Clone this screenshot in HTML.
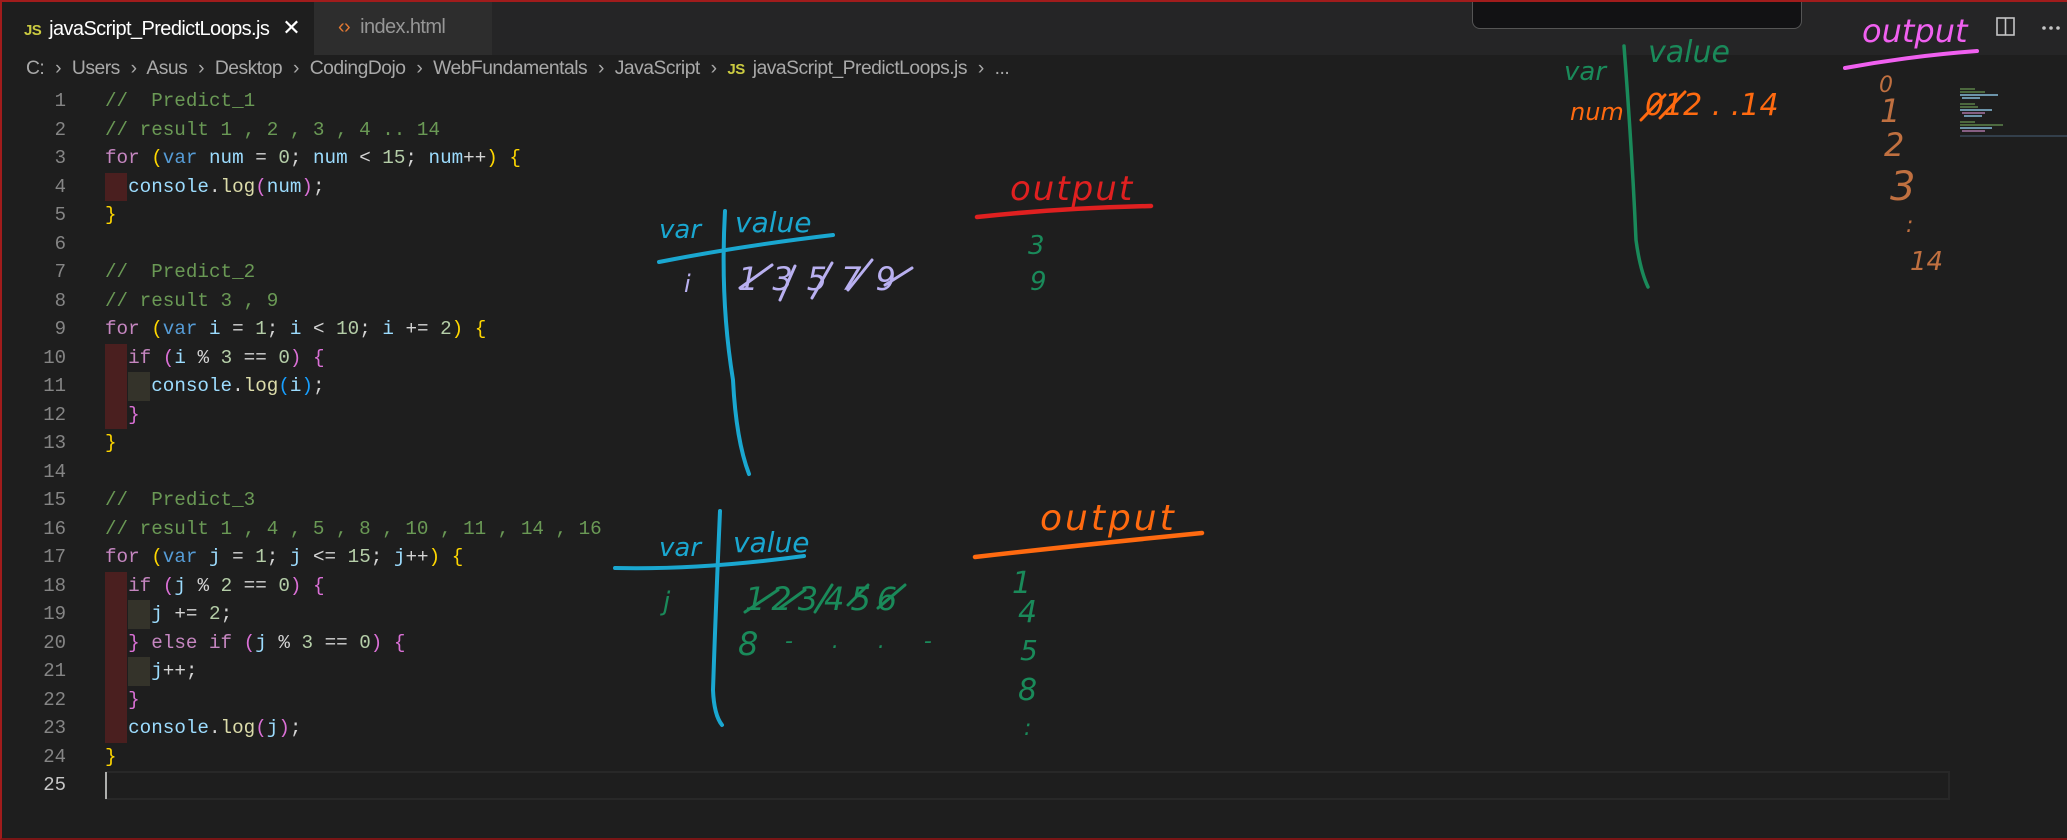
<!DOCTYPE html>
<html><head><meta charset="utf-8"><style>
*{margin:0;padding:0;box-sizing:border-box}
body{width:2067px;height:840px;background:#1e1e1e;overflow:hidden;position:relative;font-family:"Liberation Sans",sans-serif}
#frame{position:absolute;left:0;top:0;width:2067px;height:840px;border-top:2px solid #a11c1c;border-left:2px solid #a11c1c;border-bottom:2px solid #7a1515;pointer-events:none;z-index:50}
#tabs{position:absolute;left:0;top:0;width:2067px;height:55px;background:#252526}
.tab{position:absolute;top:0;height:55px;font-size:20px;line-height:55px;white-space:nowrap;letter-spacing:-0.6px}
#t1{left:0;width:314px;background:#1e1e1e;color:#fff;padding-left:24px}
#t2{left:314px;width:178px;background:#2d2d2d;color:#969696;padding-left:24px}
.js{color:#cbcb41;font-weight:bold;font-size:15px;margin-right:8px}
#crumb{position:absolute;left:26px;top:58px;font-size:19.3px;color:#a9a9a9;white-space:nowrap;letter-spacing:-0.5px}
#crumb .s{margin:0 6px;color:#a9a9a9}
.ln{position:absolute;left:0;width:66px;text-align:right;color:#858585;font-family:"Liberation Mono",monospace;font-size:19px;line-height:28.5px}
.cl{position:absolute;left:105px;color:#d4d4d4;font-family:"Liberation Mono",monospace;font-size:19.25px;line-height:28.5px;white-space:pre}
.c{color:#6a9955}.k{color:#c586c0}.v{color:#569cd6}.i{color:#9cdcfe}.n{color:#b5cea8}.f{color:#dcdcaa}
.y{color:#ffd700}.p{color:#da70d6}.b{color:#179fff}
.ind1{position:absolute;left:105px;width:22px;height:28.5px;background:#4a1f1f}
.ind2{position:absolute;left:128px;width:22px;height:28.5px;background:#34332a}
#cur{position:absolute;left:105px;top:771px;width:1845px;height:29px;border:2px solid #282828}
#caret{position:absolute;left:105px;top:772px;width:2px;height:27px;background:#aeafad}
#popup{position:absolute;left:1472px;top:-6px;width:330px;height:35px;background:#121214;border:1px solid #555;border-radius:8px}
svg{position:absolute;left:0;top:0}
.hw{font-family:"DejaVu Sans",sans-serif;font-style:italic}
</style></head><body>
<div id="tabs">
<div class="tab" id="t1"><span class="js">JS</span>javaScript_PredictLoops.js <span style="margin-left:8px;font-size:22px">✕</span></div>
<div class="tab" id="t2"><span style="color:#e37933;margin-right:10px">‹›</span>index.html</div>
</div>
<div id="popup"></div>
<div id="crumb">C: <span class="s">›</span> Users <span class="s">›</span> Asus <span class="s">›</span> Desktop <span class="s">›</span> CodingDojo <span class="s">›</span> WebFundamentals <span class="s">›</span> JavaScript <span class="s">›</span> <span class="js">JS</span>javaScript_PredictLoops.js <span class="s">›</span> ...</div>

<div id="cur"></div><div id="caret"></div>

<div class="ind1" style="top:172.5px"></div>
<div class="ind1" style="top:343.5px"></div><div class="ind1" style="top:372px"></div><div class="ind1" style="top:400.5px"></div>
<div class="ind2" style="top:372px"></div>
<div class="ind1" style="top:571.5px"></div><div class="ind1" style="top:600px"></div><div class="ind1" style="top:628.5px"></div><div class="ind1" style="top:657px"></div><div class="ind1" style="top:685.5px"></div><div class="ind1" style="top:714px"></div>
<div class="ind2" style="top:600px"></div><div class="ind2" style="top:657px"></div>

<div class="ln" style="top:87px">1</div><div class="cl" style="top:87px"><span class="c">//  Predict_1</span></div>
<div class="ln" style="top:115.5px">2</div><div class="cl" style="top:115.5px"><span class="c">// result 1 , 2 , 3 , 4 .. 14</span></div>
<div class="ln" style="top:144px">3</div><div class="cl" style="top:144px"><span class="k">for</span> <span class="y">(</span><span class="v">var</span> <span class="i">num</span> = <span class="n">0</span>; <span class="i">num</span> &lt; <span class="n">15</span>; <span class="i">num</span>++<span class="y">)</span> <span class="y">{</span></div>
<div class="ln" style="top:172.5px">4</div><div class="cl" style="top:172.5px">  <span class="i">console</span>.<span class="f">log</span><span class="p">(</span><span class="i">num</span><span class="p">)</span>;</div>
<div class="ln" style="top:201px">5</div><div class="cl" style="top:201px"><span class="y">}</span></div>
<div class="ln" style="top:229.5px">6</div>
<div class="ln" style="top:258px">7</div><div class="cl" style="top:258px"><span class="c">//  Predict_2</span></div>
<div class="ln" style="top:286.5px">8</div><div class="cl" style="top:286.5px"><span class="c">// result 3 , 9</span></div>
<div class="ln" style="top:315px">9</div><div class="cl" style="top:315px"><span class="k">for</span> <span class="y">(</span><span class="v">var</span> <span class="i">i</span> = <span class="n">1</span>; <span class="i">i</span> &lt; <span class="n">10</span>; <span class="i">i</span> += <span class="n">2</span><span class="y">)</span> <span class="y">{</span></div>
<div class="ln" style="top:343.5px">10</div><div class="cl" style="top:343.5px">  <span class="k">if</span> <span class="p">(</span><span class="i">i</span> % <span class="n">3</span> == <span class="n">0</span><span class="p">)</span> <span class="p">{</span></div>
<div class="ln" style="top:372px">11</div><div class="cl" style="top:372px">    <span class="i">console</span>.<span class="f">log</span><span class="b">(</span><span class="i">i</span><span class="b">)</span>;</div>
<div class="ln" style="top:400.5px">12</div><div class="cl" style="top:400.5px">  <span class="p">}</span></div>
<div class="ln" style="top:429px">13</div><div class="cl" style="top:429px"><span class="y">}</span></div>
<div class="ln" style="top:457.5px">14</div>
<div class="ln" style="top:486px">15</div><div class="cl" style="top:486px"><span class="c">//  Predict_3</span></div>
<div class="ln" style="top:514.5px">16</div><div class="cl" style="top:514.5px"><span class="c">// result 1 , 4 , 5 , 8 , 10 , 11 , 14 , 16</span></div>
<div class="ln" style="top:543px">17</div><div class="cl" style="top:543px"><span class="k">for</span> <span class="y">(</span><span class="v">var</span> <span class="i">j</span> = <span class="n">1</span>; <span class="i">j</span> &lt;= <span class="n">15</span>; <span class="i">j</span>++<span class="y">)</span> <span class="y">{</span></div>
<div class="ln" style="top:571.5px">18</div><div class="cl" style="top:571.5px">  <span class="k">if</span> <span class="p">(</span><span class="i">j</span> % <span class="n">2</span> == <span class="n">0</span><span class="p">)</span> <span class="p">{</span></div>
<div class="ln" style="top:600px">19</div><div class="cl" style="top:600px">    <span class="i">j</span> += <span class="n">2</span>;</div>
<div class="ln" style="top:628.5px">20</div><div class="cl" style="top:628.5px">  <span class="p">}</span> <span class="k">else if</span> <span class="p">(</span><span class="i">j</span> % <span class="n">3</span> == <span class="n">0</span><span class="p">)</span> <span class="p">{</span></div>
<div class="ln" style="top:657px">21</div><div class="cl" style="top:657px">    <span class="i">j</span>++;</div>
<div class="ln" style="top:685.5px">22</div><div class="cl" style="top:685.5px">  <span class="p">}</span></div>
<div class="ln" style="top:714px">23</div><div class="cl" style="top:714px">  <span class="i">console</span>.<span class="f">log</span><span class="p">(</span><span class="i">j</span><span class="p">)</span>;</div>
<div class="ln" style="top:742.5px">24</div><div class="cl" style="top:742.5px"><span class="y">}</span></div>
<div class="ln" style="top:771px;color:#c6c6c6">25</div>

<svg width="2067" height="840" viewBox="0 0 2067 840">
<rect x="1997" y="18" width="17" height="17" fill="none" stroke="#c5c5c5" stroke-width="1.6"/>
<line x1="2005.5" y1="18" x2="2005.5" y2="35" stroke="#c5c5c5" stroke-width="1.6"/>
<circle cx="2044" cy="28" r="1.8" fill="#c5c5c5"/><circle cx="2051" cy="28" r="1.8" fill="#c5c5c5"/><circle cx="2058" cy="28" r="1.8" fill="#c5c5c5"/>
<g stroke-width="1.2">
<line x1="1960" y1="89" x2="1975" y2="89" stroke="#6a9955"/><line x1="1960" y1="92" x2="1985" y2="92" stroke="#6a9955"/>
<line x1="1960" y1="95" x2="1998" y2="95" stroke="#9cdcfe"/><line x1="1962" y1="98" x2="1980" y2="98" stroke="#9cdcfe"/>
<line x1="1960" y1="104" x2="1975" y2="104" stroke="#6a9955"/><line x1="1960" y1="107" x2="1978" y2="107" stroke="#6a9955"/>
<line x1="1960" y1="110" x2="1992" y2="110" stroke="#9cdcfe"/><line x1="1962" y1="113" x2="1985" y2="113" stroke="#c586c0"/>
<line x1="1964" y1="116" x2="1982" y2="116" stroke="#9cdcfe"/>
<line x1="1960" y1="122" x2="1975" y2="122" stroke="#6a9955"/><line x1="1960" y1="125" x2="2003" y2="125" stroke="#6a9955"/>
<line x1="1960" y1="128" x2="1992" y2="128" stroke="#9cdcfe"/><line x1="1962" y1="131" x2="1985" y2="131" stroke="#c586c0"/>
<line x1="1960" y1="136" x2="2067" y2="136" stroke="#3a4a5a" stroke-width="1.5"/>
</g>

<g fill="none" stroke-linecap="round" stroke-linejoin="round">
<path d="M659 262 Q740 246 833 235" stroke="#1aa7d0" stroke-width="4"/>
<path d="M725 211 Q720 300 733 380 Q736 440 749 474" stroke="#1aa7d0" stroke-width="4"/>
<path d="M740 288 L772 265 M780 300 L795 266 M812 298 L832 263 M848 290 L872 260 M885 285 L912 268" stroke="#b9b0f0" stroke-width="3"/>
<path d="M977 217 Q1060 208 1151 206" stroke="#e02020" stroke-width="4.5"/>
<path d="M615 568 Q700 570 804 556" stroke="#1aa7d0" stroke-width="4"/>
<path d="M720 511 Q716 600 713 690 Q714 715 722 725" stroke="#1aa7d0" stroke-width="4"/>
<path d="M745 612 L778 590 M780 608 L805 590 M815 612 L832 585 M848 605 L868 585 M878 608 L905 585" stroke="#1a8a5a" stroke-width="3"/>
<path d="M975 557 Q1080 545 1202 533" stroke="#ff6a10" stroke-width="4.5"/>
<path d="M1624 46 Q1632 150 1636 240 Q1640 270 1648 287" stroke="#1a8a5a" stroke-width="3.5"/>
<path d="M1641 120 L1665 95 M1660 118 L1685 92" stroke="#ff6a10" stroke-width="3"/>
<path d="M1845 68 Q1910 56 1977 51" stroke="#f060f0" stroke-width="4"/>
</g>

<g class="hw">
<text x="659" y="238" fill="#1aa7d0" font-size="26">var</text>
<text x="735" y="232" fill="#1aa7d0" font-size="28">value</text>
<text x="684" y="292" fill="#b9b0f0" font-size="24">i</text>
<text x="738" y="290" fill="#b9b0f0" font-size="32" letter-spacing="14">13579</text>
<text x="1010" y="200" fill="#e02020" font-size="34" letter-spacing="2">output</text>
<text x="1028" y="254" fill="#1a8a5a" font-size="26">3</text>
<text x="1030" y="290" fill="#1a8a5a" font-size="26">9</text>

<text x="659" y="556" fill="#1aa7d0" font-size="26">var</text>
<text x="733" y="552" fill="#1aa7d0" font-size="28">value</text>
<text x="663" y="610" fill="#1a8a5a" font-size="26">j</text>
<text x="745" y="610" fill="#1a8a5a" font-size="32" letter-spacing="6">123456</text>
<text x="738" y="655" fill="#1a8a5a" font-size="32">8</text>
<text x="785" y="648" fill="#1a8a5a" font-size="22" letter-spacing="16">- . . -</text>
<text x="1040" y="530" fill="#ff6a10" font-size="36" letter-spacing="3">output</text>
<text x="1012" y="593" fill="#1a8a5a" font-size="30">1</text>
<text x="1018" y="622" fill="#1a8a5a" font-size="30">4</text>
<text x="1020" y="660" fill="#1a8a5a" font-size="28">5</text>
<text x="1018" y="700" fill="#1a8a5a" font-size="30">8</text>
<text x="1024" y="735" fill="#1a8a5a" font-size="22">:</text>

<text x="1564" y="80" fill="#1a8a5a" font-size="26">var</text>
<text x="1648" y="62" fill="#1a8a5a" font-size="30">value</text>
<text x="1570" y="120" fill="#ff6a10" font-size="24">num</text>
<text x="1645" y="115" fill="#ff6a10" font-size="30">012 . .14</text>
<text x="1862" y="42" fill="#f060f0" font-size="32">output</text>
<text x="1879" y="92" fill="#c07040" font-size="22">0</text>
<text x="1880" y="122" fill="#c07040" font-size="32">1</text>
<text x="1884" y="156" fill="#c07040" font-size="32">2</text>
<text x="1890" y="200" fill="#c07040" font-size="40">3</text>
<text x="1906" y="232" fill="#c07040" font-size="22">:</text>
<text x="1910" y="270" fill="#c07040" font-size="26">14</text>
</g>
</svg>
<div id="frame"></div>
</body></html>
